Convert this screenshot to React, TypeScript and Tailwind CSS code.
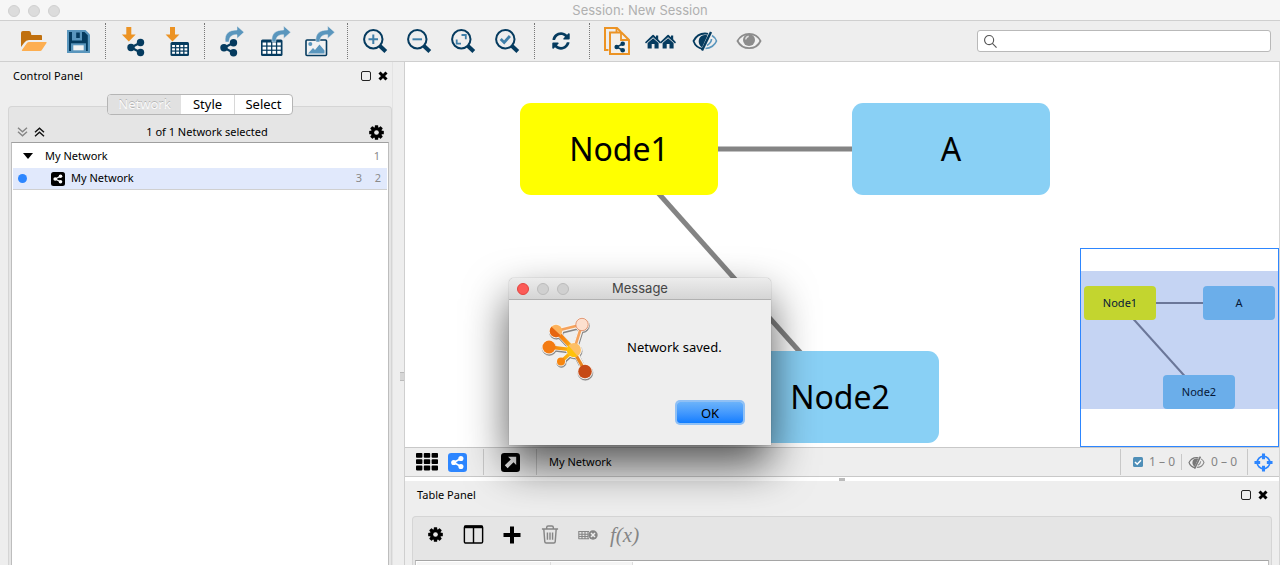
import type { ReactNode } from "react";
import { FaSyncAlt } from "react-icons/fa";

const NAVY = "#053b5f";
const BLUE = "#5a96bd";
const ORANGE = "#ec9324";

function ToolButton({ label, children }: { label: string; children: ReactNode }) {
  return (
    <button type="button" aria-label={label} className="h-10 w-11 shrink-0">
      <svg viewBox="0 0 44 40" className="h-10 w-11" fill="none">
        {children}
      </svg>
    </button>
  );
}

function Separator() {
  return <div className="mr-[4px] ml-[6px] h-9 w-px shrink-0 border-l border-dotted border-[#777]" />;
}

function Share({ x, y, dx = 9.5, dy = 5, r = 3.7, w = 2.2, color = NAVY }: { x: number; y: number; dx?: number; dy?: number; r?: number; w?: number; color?: string }) {
  return (
    <g fill={color} stroke={color}>
      <path d={`M${x + dx} ${y - dy}L${x} ${y}L${x + dx} ${y + dy}`} fill="none" strokeWidth={w} />
      <g stroke="none">
        <circle cx={x} cy={y} r={r} />
        <circle cx={x + dx} cy={y - dy} r={r} />
        <circle cx={x + dx} cy={y + dy} r={r} />
      </g>
    </g>
  );
}

function TableGlyph({ x, y, w, h }: { x: number; y: number; w: number; h: number }) {
  const cw = (w - 2) / 4;
  return (
    <g>
      <rect x={x} y={y} width={w} height={h} rx="1.5" fill={NAVY} />
      {[0, 1, 2].map((r) =>
        [0, 1, 2, 3].map((c) => (
          <rect key={`${r}${c}`} x={x + 1.6 + c * cw} y={y + 3 + (r * (h - 4)) / 3} width={cw - 1.3} height={(h - 4) / 3 - 1.2} fill="#fff" />
        )),
      )}
    </g>
  );
}

function DownArrow({ x }: { x: number }) {
  return <path d={`M${x} 6h5v7.500h4.400l-6.900 7-6.900-7h4.400z`} fill={ORANGE} />;
}

function CurvedArrow({ x }: { x: number }) {
  return (
    <path
      transform={`translate(${x} 0)`}
      d="M.3 21C-.8 12.500 4 9 12 9V5l7 6.200-7 6.300v-3.800C7 13.700 4.500 15 4 21z"
      fill={BLUE}
      stroke="#eee"
      strokeWidth=".5"
    />
  );
}

function Lens({ children }: { children: ReactNode }) {
  return (
    <>
      <circle cx="21.300" cy="18.200" r="9.200" stroke={NAVY} strokeWidth="2" />
      <path d="M28 25l5.800 5.500" stroke={NAVY} strokeWidth="4" />
      <g stroke="#3f7fa9" strokeWidth="2">{children}</g>
    </>
  );
}

function House({ x }: { x: number }) {
  return (
    <g transform={`translate(${x} 13)`} fill={NAVY}>
      <path d="M0 8.200L7.500 1q.6-.5 1.200 0L11 3.200V1.500h2.200v3.800L16 8.200l-1 1.200L8.100 3.200 1 9.400z" />
      <path d="M2.600 9L8.100 4.200 13.600 9v5.500H9.500V10h-2.800v4.500H2.600z" />
    </g>
  );
}

function Gear({ className }: { className: string }) {
  return (
    <svg viewBox="0 0 16 16" className={className} fill="#000">
      {[0, 45, 90, 135].map((a) => (
        <rect key={a} x="6.200" y=".2" width="3.600" height="15.600" rx=".6" transform={`rotate(${a} 8 8)`} />
      ))}
      <circle cx="8" cy="8" r="5.900" />
      <circle cx="8" cy="8" r="2.500" fill="#e6e6e6" />
    </svg>
  );
}

function HiddenEye({ left, right }: { left: string; right: string }) {
  return (
    <>
      <path d="M21 28C15 27 12.500 23 11.500 20 14 15 18 12.500 23 12.500c1 0 2 0 3 .4" stroke={left} strokeWidth="1.800" />
      <path d="M25.500 14.500L20 26.500C16.500 24 16 20 17.500 17c1.500-2.700 5-3.700 8-2.500z" fill={left} />
      <path d="M29 11L20 29.500" stroke={left} strokeWidth="2.400" />
      <path d="M30 14.500c2.500 1.500 4 3.500 4.500 5.500-1.500 4-6 7.500-11 7.500M29.500 18c0 2.500-1.500 4.500-4.500 6.500" stroke={right} strokeWidth="1.600" />
    </>
  );
}

function PanelControls({ name }: { name: string }) {
  return (
    <div className="flex items-center gap-[7px]">
      <button type="button" aria-label={`Float ${name}`} className="size-[10px] rounded-[2px] border border-[#222]" />
      <button type="button" aria-label={`Close ${name}`} className="size-[10px]">
        <svg viewBox="0 0 10 10" className="size-[10px]">
          <path d="M1.500 1.500l7 7M8.500 1.500l-7 7" stroke="#000" strokeWidth="3" />
        </svg>
      </button>
    </div>
  );
}

function Toolbar() {
  return (
    <div className="flex h-[41px] shrink-0 items-center border-b border-[#cfcfcf] bg-[#eee] pr-[9px] pl-[11px]">
      <ToolButton label="Open Session">
        <path d="M10 12q0-2 2-2h6q1.500 0 2 2l.3 2H30q1 0 1 1v4H18q-3 0-5 3l-3 4z" fill="#c0700f" />
        <path d="M18 21h17q1 0 .5 1L31 28.800q-.7 1.200-1.800 1.200H11.500q-1.200 0-.4-1.200L16 22q.8-1 2-1z" fill="#fdae50" />
      </ToolButton>
      <ToolButton label="Save Session">
        <path d="M12 9h18.500l4.500 4.500V32H12z" fill={BLUE} />
        <path d="M14 11h15.500l3.300 3.300V30H14z" fill={NAVY} />
        <rect x="17" y="9" width="10" height="10.500" fill={BLUE} />
        <rect x="21.200" y="11.500" width="3.600" height="5.500" fill={NAVY} />
        <rect x="16" y="22.300" width="15" height="9.700" fill={BLUE} />
        <rect x="18.300" y="24.300" width="10.400" height="5" fill="#f3f3f3" />
      </ToolButton>
      <Separator />
      <ToolButton label="Import Network">
        <DownArrow x={16.3} />
        <Share x={21} y={26.5} />
      </ToolButton>
      <ToolButton label="Import Table">
        <DownArrow x={16} />
        <TableGlyph x={16.5} y={21} w={18.5} h={14} />
      </ToolButton>
      <Separator />
      <ToolButton label="Export Network">
        <CurvedArrow x={16} />
        <Share x={15} y={26.7} />
      </ToolButton>
      <ToolButton label="Export Table">
        <TableGlyph x={8} y={18.5} w={21.5} h={16.5} />
        <CurvedArrow x={18.7} />
      </ToolButton>
      <ToolButton label="Export Image">
        <rect x="9" y="19" width="20.500" height="15.500" rx="1" stroke={NAVY} strokeWidth="1.600" fill="#f3f3f3" />
        <circle cx="13.300" cy="23" r="2" fill={BLUE} />
        <path d="M11 32.500l5-5.500 2 2 4.500-5.500 5 6v3z" fill={BLUE} />
        <CurvedArrow x={18.7} />
      </ToolButton>
      <Separator />
      <ToolButton label="Zoom In"><Lens><path d="M21.300 13.500v9.500M16.500 18.300H26" /></Lens></ToolButton>
      <ToolButton label="Zoom Out"><Lens><path d="M16.500 18.300H26" /></Lens></ToolButton>
      <ToolButton label="Fit Content"><Lens><path d="M21.500 14h4.300v4.300M21 22.700h-4.300v-4.300" strokeWidth="1.800" /></Lens></ToolButton>
      <ToolButton label="Fit Selected"><Lens><path d="M16.700 18l3.500 3.500 5.700-6.500" strokeWidth="2.800" /></Lens></ToolButton>
      <Separator />
      <button type="button" aria-label="Apply Layout" className="flex h-10 w-11 shrink-0 items-center justify-center">
        <FaSyncAlt className="size-[18px] text-[#053b5f]" />
      </button>
      <Separator />
      <ToolButton label="New Network From Selection">
        <path d="M14.500 29H11V7h12l4 4" stroke={ORANGE} strokeWidth="2" />
        <path d="M16 11.500h11.500l7.500 7.500v14H16z" fill="#f3efea" stroke={ORANGE} strokeWidth="2" />
        <path d="M22.500 7v4M27 11.500V19h8" stroke={ORANGE} strokeWidth="1.800" />
        <Share x={22.7} y={26} dx={6} dy={3.2} r={2.3} w={1.5} />
      </ToolButton>
      <ToolButton label="First Neighbors">
        <House x={7} />
        <House x={22} />
      </ToolButton>
      <ToolButton label="Hide Selected"><HiddenEye left={NAVY} right={BLUE} /></ToolButton>
      <ToolButton label="Show All">
        <path d="M11.500 20c5-9.600 18.500-9.600 23 0-4.500 9.600-18 9.600-23 0z" stroke="#8c8c8c" strokeWidth="1.800" fill="#f1f1f1" />
        <circle cx="23" cy="19" r="6" fill="#8c8c8c" />
        <path d="M19.700 18.500q.3-2.800 3-3.300" stroke="#ddd" strokeWidth="1.400" />
      </ToolButton>
      <label className="ml-auto flex h-[22px] w-[294px] items-center gap-1 rounded-[3px] border border-[#b9b9b9] bg-white px-[6px]">
        <svg viewBox="0 0 14 14" className="size-[13px] shrink-0" fill="none" stroke="#555" strokeWidth="1.200">
          <circle cx="5.500" cy="5.500" r="4.900" />
          <path d="M9 9l4.500 4.500" />
        </svg>
        <input type="search" aria-label="Search" className="min-w-0 flex-1 bg-transparent text-xs outline-none" />
      </label>
    </div>
  );
}

function ControlPanel() {
  return (
    <aside className="flex w-[405px] shrink-0 border-r border-[#cfcfcf]">
      <section className="flex min-w-0 flex-1 flex-col pl-2">
        <header className="flex h-7 shrink-0 items-center justify-between pr-[4px] pl-[5px]">
          <h2>Control Panel</h2>
          <PanelControls name="Control Panel" />
        </header>
        <div className="mt-4 flex min-h-0 flex-1 flex-col rounded-t-[4px] border border-b-0 border-[#d5d5d5] bg-[#e5e5e5] px-[2px]">
          <div className="z-10 -mt-[13px] flex h-[21px] shrink-0 self-center overflow-hidden rounded-[4px] border border-[#b5b5b5] bg-white text-[13px]/[19px]">
            <button type="button" className="w-[73px] bg-[#e1e1e1] text-[#fafafa] [text-shadow:0_-1px_0_#b5b5b5]">Network</button>
            <button type="button" className="w-[53px]">Style</button>
            <button type="button" className="w-[58px] border-l border-[#d8d8d8]">Select</button>
          </div>
          <div className="flex h-[27px] shrink-0 items-center justify-between pt-[7px] pr-[5px] pl-[6px]">
            <div className="flex gap-[6px]">
              <button type="button" aria-label="Expand all">
                <svg viewBox="0 0 11 10" className="h-[10px] w-[11px]" fill="none" stroke="#858585" strokeWidth="1.400"><path d="M1 .7l4.500 4L10 .7M1 4.700l4.500 4 4.500-4" /></svg>
              </button>
              <button type="button" aria-label="Collapse all">
                <svg viewBox="0 0 11 10" className="h-[10px] w-[11px]" fill="none" stroke="#111" strokeWidth="1.400"><path d="M1 5.300l4.500-4 4.500 4M1 9.300l4.500-4 4.500 4" /></svg>
              </button>
            </div>
            <p>1 of 1 Network selected</p>
            <button type="button" aria-label="Network options"><Gear className="size-[15px]" /></button>
          </div>
          <div className="min-h-0 flex-1 border border-t-[#9f9f9f] border-r-[#bdbdbd] border-b-0 border-l-[#bdbdbd] bg-white px-px pt-px">
            <div className="flex h-6 items-center pr-[7px] pl-[10px]">
              <svg viewBox="0 0 10 6" className="mr-3 h-[6px] w-[10px]"><path d="M0 0h10L5 6z" /></svg>
              <span>My Network</span>
              <span className="ml-auto text-[#8a8a8a]">1</span>
            </div>
            <div className="flex h-[22px] items-center border-b border-[#d0d0d0] bg-[#e1e9fc] pr-[6px] pl-[5px]">
              <span className="size-[9px] rounded-full bg-[#2d86ff]" />
              <svg viewBox="0 0 14 14" className="mr-[6px] ml-6 size-[14px]"><rect width="14" height="14" rx="2.500" /><Share x={4.2} y={7} dx={5.3} dy={2.8} r={1.8} w={1.2} color="#fff" /></svg>
              <span>My Network</span>
              <span className="ml-auto w-[19px] text-[#8a8a8a]">3</span>
              <span className="text-[#8a8a8a]">2</span>
            </div>
          </div>
        </div>
      </section>
      <div className="flex w-[12px] items-start justify-end border-l border-[#e3e3e3] pt-[310px]">
        <div className="h-[9px] w-[4px] border-y border-[#bbb] bg-[#d6d6d6]" />
      </div>
    </aside>
  );
}

function NetworkCanvas() {
  return (
    <div className="relative min-h-0 flex-1 overflow-hidden bg-white text-[32px]">
      <svg className="absolute inset-0 size-full" stroke="#848484" strokeWidth="5">
        <line x1="214" y1="87" x2="546" y2="87" />
        <line x1="214" y1="87" x2="435" y2="335" />
      </svg>
      <div className="absolute top-[41px] left-[115px] flex h-[92px] w-[198px] items-center justify-center rounded-[11px] bg-[#ff0]">Node1</div>
      <div className="absolute top-[41px] left-[447px] flex h-[92px] w-[198px] items-center justify-center rounded-[11px] bg-[#89d0f5]">A</div>
      <div className="absolute top-[289px] left-[336px] flex h-[92px] w-[198px] items-center justify-center rounded-[11px] bg-[#89d0f5]">Node2</div>
      <div className="absolute right-0 bottom-0 size-[199px] border border-[#2d86ff] bg-white text-[11px] text-[#061838]">
        <div className="absolute top-[22px] h-[138px] w-full bg-[#c5d4f3]" />
        <svg className="absolute inset-0 size-full" stroke="#6b7799" strokeWidth="2">
          <line x1="38" y1="54" x2="158" y2="54" />
          <line x1="38" y1="54" x2="118" y2="143" />
        </svg>
        <div className="absolute top-[37px] left-[3px] flex h-[34px] w-[72px] items-center justify-center rounded-[4px] bg-[#c3d52f]">Node1</div>
        <div className="absolute top-[37px] left-[122px] flex h-[34px] w-[72px] items-center justify-center rounded-[4px] bg-[#6baeea]">A</div>
        <div className="absolute top-[126px] left-[82px] flex h-[34px] w-[72px] items-center justify-center rounded-[4px] bg-[#6baeea]">Node2</div>
      </div>
    </div>
  );
}

function StatusBar() {
  return (
    <div className="flex h-[30px] shrink-0 items-center border-y border-[#c8c8c8] bg-[#eee]">
      <button type="button" aria-label="Grid view" className="ml-[11px]">
        <svg viewBox="0 0 22 18" className="h-[18px] w-[22px]">
          {[0, 6.3, 12.6].map((y) => [0, 7.8, 15.6].map((x) => <rect key={`${x}${y}`} x={x} y={y} width="6.400" height="4.800" rx=".8" />))}
        </svg>
      </button>
      <button type="button" aria-label="Network view" className="ml-[10px]">
        <svg viewBox="0 0 20 20" className="size-[19px]"><rect width="20" height="20" rx="3.500" fill="#2d86ff" /><Share x={6} y={10} dx={7.6} dy={4.2} r={2.7} w={1.8} color="#fff" /></svg>
      </button>
      <div className="ml-4 h-[26px] w-px bg-[#c8c8c8]" />
      <button type="button" aria-label="Detach view" className="ml-[17px]">
        <svg viewBox="0 0 20 20" className="size-[19px]"><rect width="20" height="20" rx="3.500" /><path d="M7.500 4H16v8.500l-2.800-2.800L7 16 4 13l6.300-6.200z" fill="#eee" /></svg>
      </button>
      <div className="ml-4 h-[26px] w-px bg-[#c8c8c8]" />
      <span className="ml-3">My Network</span>
      <div className="ml-auto flex items-center text-xs text-[#858585]">
        <div className="mr-3 h-[26px] w-px bg-[#c8c8c8]" />
        <svg viewBox="0 0 10 10" className="mr-[6px] size-[10px]"><rect width="10" height="10" rx="1.500" fill="#4f8fb8" /><path d="M2 5l2.200 2.200L8 3.200" fill="none" stroke="#fff" strokeWidth="1.600" /></svg>
        <span>1 – 0</span>
        <div className="mx-[6px] h-4 w-px bg-[#c8c8c8]" />
        <svg viewBox="10 10 26 20" className="mr-[6px] h-[13px] w-[17px]" fill="none"><HiddenEye left="#777" right="#888" /></svg>
        <span>0 – 0</span>
        <div className="mr-[6px] ml-[10px] h-[26px] w-px bg-[#c8c8c8]" />
        <button type="button" aria-label="Toggle bird's eye view" className="mr-[6px]">
          <svg viewBox="0 0 20 20" className="size-[19px]" fill="none" stroke="#2d86ff"><circle cx="10" cy="10" r="6.600" strokeWidth="1.800" /><path d="M10 .5v6M10 13.500v6M.5 10h6M13.500 10h6" strokeWidth="3.200" /></svg>
        </button>
      </div>
    </div>
  );
}

function TablePanel() {
  return (
    <section className="flex h-[84px] shrink-0 flex-col bg-[#eee] px-[7px]">
      <header className="flex h-7 shrink-0 items-center justify-between pr-[4px] pl-[5px]">
        <h2>Table Panel</h2>
        <PanelControls name="Table Panel" />
      </header>
      <div className="mt-[7px] flex flex-1 flex-col rounded-t-[4px] border border-b-0 border-[#d5d5d5] bg-[#e5e5e5] px-[2px]">
        <div className="flex h-[43px] shrink-0 items-center pb-[8px] pl-[13px]">
          <button type="button" aria-label="Table options"><Gear className="size-[15px]" /></button>
          <button type="button" aria-label="Show columns" className="ml-5">
            <svg viewBox="0 0 21 20" className="h-[19px] w-[21px]" fill="none" stroke="#000"><rect x=".9" y="1" width="19.200" height="18" rx="1.500" strokeWidth="1.500" /><path d="M1 2h19" strokeWidth="2.800" /><path d="M10.500 3v16" strokeWidth="1.500" /></svg>
          </button>
          <button type="button" aria-label="Add column" className="ml-[19px]">
            <svg viewBox="0 0 18 18" className="size-[18px]"><path d="M9 .5v17M.5 9h17" stroke="#000" strokeWidth="4" /></svg>
          </button>
          <button type="button" aria-label="Delete column" className="ml-5">
            <svg viewBox="0 0 18 20" className="h-[19px] w-[18px]" fill="none" stroke="#858585" strokeWidth="1.500"><path d="M.5 4.200h17M5.500 4V2.500Q5.500 1 7 1h4q1.500 0 1.500 1.500V4M2.500 4.500l1 13q.1 1.500 1.500 1.500h8q1.400 0 1.500-1.500l1-13M6.300 8v7.500M9 8v7.500M11.700 8v7.500" /></svg>
          </button>
          <button type="button" aria-label="Delete table" className="ml-[19px]">
            <svg viewBox="0 0 20 10" className="h-[10px] w-5" fill="none" stroke="#858585"><path d="M.5 1.500H11M.5 4.200H10M.5 6.500H10M.5 8.700H11M.8 1v8M4 1v8M7 1v8M10 1v8" strokeWidth="1.100" /><circle cx="15" cy="5" r="4.700" fill="#858585" stroke="none" /><path d="M13 3l4 4M17 3l-4 4" stroke="#eee" strokeWidth="1.500" /></svg>
          </button>
          <button type="button" aria-label="Function builder" className="ml-3 font-['Liberation_Serif',serif] text-[21px]/[20px] text-[#858585] italic">f(x)</button>
        </div>
        <div className="flex flex-1 border border-t-[#a5a5a5] border-b-0 border-[#bdbdbd] bg-white px-px pt-px">
          <div className="w-[134px] border-r border-[#ddd] bg-[#f5f5f5]" />
          <div className="w-[82px] border-r border-[#ddd] bg-[#f5f5f5]" />
        </div>
      </div>
    </section>
  );
}

function AppLogo() {
  const nodes = [
    [42, 8.5, 6.8],
    [16, 15, 6.8],
    [9, 31, 7],
    [34, 34, 7.5],
    [21, 45.5, 4.5],
    [45, 55.5, 7.3],
  ];
  const edges = "M42 8.500L16 15L34 34L42 8.500M9 31L34 34L21 45.500M34 34L45 55";
  return (
    <svg viewBox="0 0 56 66" className="h-[66px] w-14 shrink-0" fill="none" strokeLinejoin="round">
      <defs>
        <linearGradient id="body" gradientUnits="userSpaceOnUse" x1="8" y1="14" x2="42" y2="40">
          <stop offset="0" stopColor="#e4610c" />
          <stop offset=".45" stopColor="#f88b14" />
          <stop offset=".78" stopColor="#ffc60b" />
          <stop offset="1" stopColor="#ffb75d" />
        </linearGradient>
        <linearGradient id="arms" gradientUnits="userSpaceOnUse" x1="6" y1="31" x2="34" y2="34">
          <stop offset="0" stopColor="#ee6f12" />
          <stop offset="1" stopColor="#ffc20a" />
        </linearGradient>
      </defs>
      <g transform="translate(.4 1.200)" stroke="#858585" fill="#858585">
        <path d={edges} fill="none" strokeWidth="5.600" />
        {nodes.map(([x, y, r]) => <circle key={`${x}${y}`} cx={x} cy={y} r={r + 0.2} strokeWidth=".6" />)}
      </g>
      <g stroke="#f7f2ed">
        <path d={edges} strokeWidth="5" />
        {nodes.map(([x, y, r]) => <circle key={`${x}${y}`} cx={x} cy={y} r={r} fill="#fff" strokeWidth="1" />)}
      </g>
      <path d="M16 15L42 8.500L34 34" stroke="#f5a25c" strokeWidth="2.600" />
      <path d="M9 31L34 34L21 45.500" stroke="url(#arms)" strokeWidth="3.600" />
      <path d="M33 34L45 55" stroke="#e88620" strokeWidth="3.200" />
      <path d="M16 15L34 34" stroke="url(#body)" strokeWidth="4" />
      <circle cx="42" cy="8.500" r="6.200" fill="#fde0cf" stroke="#d9835a" strokeWidth=".8" />
      <circle cx="16" cy="15" r="6.200" fill="#fdb35c" />
      <path d="M11.500 10.700A6.200 6.200 0 0 0 20.500 19.300z" fill="#e6650f" />
      <circle cx="9" cy="31" r="6.500" fill="#f37b12" />
      <circle cx="34" cy="34" r="7" fill="#fdbf66" />
      <path d="M28.500 29.500A7 7 0 0 0 37.500 40z" fill="#ffc20a" />
      <circle cx="21" cy="45.500" r="4" fill="#f6850f" />
      <circle cx="45" cy="55.500" r="6.800" fill="#c64a16" />
    </svg>
  );
}

function MessageDialog() {
  return (
    <div role="dialog" aria-label="Message" className="absolute top-[278px] left-1/2 z-20 w-[262px] -translate-x-1/2 rounded-t-[5px] bg-[#eee] shadow-[0_20px_44px_rgba(0,0,0,0.65),0_0_1px_rgba(0,0,0,0.5)]">
      <header className="relative flex h-[22px] items-center justify-center rounded-t-[5px] border-b border-[#b1b1b1] bg-linear-to-b from-[#ececec] to-[#d5d5d5] pt-px">
        <div className="absolute left-2 flex gap-2">
          <button type="button" aria-label="Close" className="size-3 rounded-full border border-[#e2443f] bg-[#fc5b57]" />
          <button type="button" aria-label="Minimize" disabled className="size-3 rounded-full border border-[#bcbcbc] bg-[#d0d0d0]" />
          <button type="button" aria-label="Zoom" disabled className="size-3 rounded-full border border-[#bcbcbc] bg-[#d0d0d0]" />
        </div>
        <h2 className="font-[Inter,sans-serif] text-[13px] text-[#454545]">Message</h2>
      </header>
      <div className="flex items-center gap-[31px] pt-4 pl-[31px] text-[13px]">
        <AppLogo />
        <p className="pb-[3px]">Network saved.</p>
      </div>
      <div className="flex justify-end pt-5 pr-[28px] pb-[22px]">
        <button type="button" className="h-[21px] w-[66px] rounded-[3px] bg-linear-to-b from-[#6bb3fa] to-[#0d7dff] text-[13px]/[20px] ring-2 ring-[#8fc0f5]">OK</button>
      </div>
    </div>
  );
}

export default function App() {
  return (
    <div className="relative flex h-screen flex-col overflow-hidden bg-[#eee] font-['Noto_Sans',sans-serif] text-[11px] text-black">
      <header className="relative flex h-[21px] shrink-0 items-center justify-center border-b border-[#cfcfcf] bg-[#f6f6f6] pt-px">
        <div className="absolute left-2 flex gap-2">
          <button type="button" aria-label="Close window" className="size-3 rounded-full border border-[#d0d0d0] bg-[#dcdcdc]" />
          <button type="button" aria-label="Minimize window" className="size-3 rounded-full border border-[#d0d0d0] bg-[#dcdcdc]" />
          <button type="button" aria-label="Zoom window" className="size-3 rounded-full border border-[#d0d0d0] bg-[#dcdcdc]" />
        </div>
        <h1 className="font-[Inter,sans-serif] text-[13px] text-[#b0b0b0]">Session: New Session</h1>
      </header>
      <Toolbar />
      <div className="flex min-h-0 flex-1">
        <ControlPanel />
        <main className="flex min-w-0 flex-1 flex-col border-r border-[#d5d5d5]">
          <NetworkCanvas />
          <StatusBar />
          <div className="flex h-1 shrink-0 items-end justify-center bg-white">
            <div className="h-[3px] w-[6px] bg-[#bbb]" />
          </div>
          <TablePanel />
        </main>
      </div>
      <MessageDialog />
    </div>
  );
}
